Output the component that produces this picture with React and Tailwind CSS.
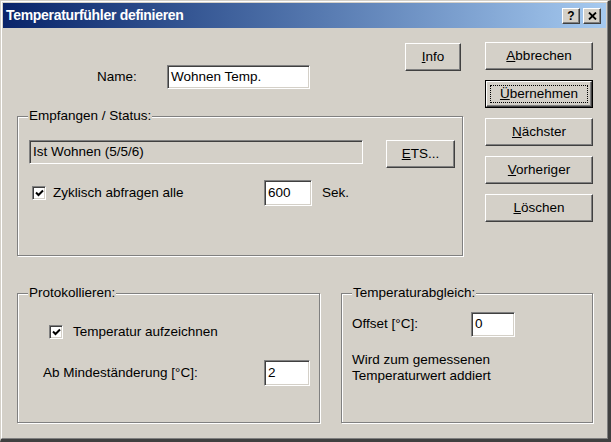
const raised =
    'bg-[#d4d0c8] border border-t-white border-l-white border-r-[#404040] border-b-[#404040] shadow-[inset_-1px_-1px_0_#808080]';
const sunken =
    'border border-t-[#808080] border-l-[#808080] border-r-white border-b-white shadow-[inset_1px_1px_0_#404040,inset_-1px_-1px_0_#d4d0c8]';

function Button({ className = '', children }) {
    return (
        <div className={`${raised} flex items-center justify-center ${className}`}>
            <span>{children}</span>
        </div>
    );
}

function DefaultButton({ className = '', children }) {
    return (
        <div className={`border border-black ${className}`}>
            <div className={`${raised} relative flex h-full items-center justify-center`}>
                <div className="absolute inset-[3px] border border-dotted border-black" />
                <span>{children}</span>
            </div>
        </div>
    );
}

function Field({ value, className = '', readOnly = false }) {
    return (
        <div className={`${sunken} ${readOnly ? 'bg-[#d4d0c8]' : 'bg-white'} flex items-center pl-[3px] ${className}`}>
            {value}
        </div>
    );
}

function Checkbox() {
    return (
        <div className={`${sunken} flex h-[14px] w-[14px] items-center justify-center bg-white`}>
            <svg width="9" height="8" viewBox="0 0 9 8">
                <path d="M1 3.5 L3.5 6 L8 1.5" fill="none" stroke="#000" strokeWidth="2" />
            </svg>
        </div>
    );
}

function Group({ label, className = '', children }) {
    return (
        <div className={`relative border border-[#808080] shadow-[inset_1px_1px_0_#fff,1px_1px_0_#fff] ${className}`}>
            <span className="absolute -top-[9px] left-[10px] bg-[#d4d0c8] px-px leading-4">{label}</span>
            {children}
        </div>
    );
}

export default function App() {
    return (
        <div className="h-[442px] w-[611px] border-t border-l border-r-[3px] border-b-[3px] border-t-[#d4d0c8] border-l-[#d4d0c8] border-r-[#404040] border-b-[#404040] bg-[#d4d0c8] font-['Liberation_Sans',Arial,sans-serif] text-[13.5px] text-black">
            <div className="h-full border border-t-white border-l-white border-r-[#808080] border-b-[#808080] p-px">
                {/* title bar */}
                <div className="flex h-[25px] items-center bg-gradient-to-r from-[#0a246a] to-[#a6caf0] pl-[3px] pr-[5px]">
                    <span className="text-[14px] font-bold tracking-[-0.3px] text-white">Temperaturfühler definieren</span>
                    <div className="ml-auto flex gap-[3px]">
                        <div className={`${raised} flex h-[16px] w-[18px] items-center justify-center text-[12px] font-bold leading-none`}>
                            ?
                        </div>
                        <div className={`${raised} flex h-[16px] w-[18px] items-center justify-center`}>
                            <svg width="9" height="8" viewBox="0 0 9 8">
                                <path d="M1 0.5 L8 7.5 M8 0.5 L1 7.5" stroke="#000" strokeWidth="1.8" />
                            </svg>
                        </div>
                    </div>
                </div>

                <div className="pl-[14px] pt-[14px]">
                    <div className="flex">
                        <div className="w-[446px]">
                            <div className="flex h-[46px] items-start">
                                <div className="ml-[80px] mt-[23px] flex items-center">
                                    <span className="w-[70px]">Name:</span>
                                    <Field value="Wohnen Temp." className="h-[24px] w-[143px]" />
                                </div>
                                <Button className="ml-auto mr-[2px] mt-px h-[28px] w-[56px]">
                                    <span className="underline">I</span>nfo
                                </Button>
                            </div>

                            <Group label="Empfangen / Status:" className="mt-[28px] h-[140px] pl-[11px] pt-[23px]">
                                <div className="flex items-start">
                                    <Field value="Ist Wohnen (5/5/6)" readOnly className="h-[24px] w-[334px]" />
                                    <Button className="ml-[23px] h-[28px] w-[69px]">
                                        <span className="underline">E</span>TS...
                                    </Button>
                                </div>
                                <div className="mt-[12px] flex h-[26px] items-center">
                                    <div className="flex w-[235px] items-center pl-[3px]">
                                        <Checkbox />
                                        <span className="ml-[7px]">Zyklisch abfragen alle</span>
                                    </div>
                                    <Field value="600" className="h-[26px] w-[48px]" />
                                    <span className="ml-[10px]">Sek.</span>
                                </div>
                            </Group>
                        </div>

                        <div className="ml-[22px] flex w-[108px] flex-col gap-[10px]">
                            <Button className="h-[28px]">
                                <span className="underline">A</span>bbrechen
                            </Button>
                            <DefaultButton className="h-[28px]">
                                <span className="underline">Ü</span>bernehmen
                            </DefaultButton>
                            <Button className="h-[28px]">
                                <span className="underline">N</span>ächster
                            </Button>
                            <Button className="h-[28px]">
                                <span className="underline">V</span>orheriger
                            </Button>
                            <Button className="h-[28px]">
                                <span className="underline">L</span>öschen
                            </Button>
                        </div>
                    </div>

                    <div className="mt-[37px] flex">
                        <Group label="Protokollieren:" className="h-[130px] w-[303px] pt-[30px]">
                            <div className="flex h-[16px] items-center pl-[31px]">
                                <Checkbox />
                                <span className="ml-[10px]">Temperatur aufzeichnen</span>
                            </div>
                            <div className="mt-[20px] flex h-[26px] items-center pl-[25px]">
                                <span className="w-[221px]">Ab Mindeständerung [°C]:</span>
                                <Field value="2" className="h-[26px] w-[46px]" />
                            </div>
                        </Group>

                        <Group label="Temperaturabgleich:" className="ml-[21px] h-[130px] w-[252px] pl-[10px] pt-[18px]">
                            <div className="flex h-[25px] items-center">
                                <span className="w-[119px]">Offset [°C]:</span>
                                <Field value="0" className="h-[25px] w-[44px]" />
                            </div>
                            <div className="mt-[15px] leading-4">
                                <div>Wird zum gemessenen</div>
                                <div>Temperaturwert addiert</div>
                            </div>
                        </Group>
                    </div>
                </div>
            </div>
        </div>
    );
}
